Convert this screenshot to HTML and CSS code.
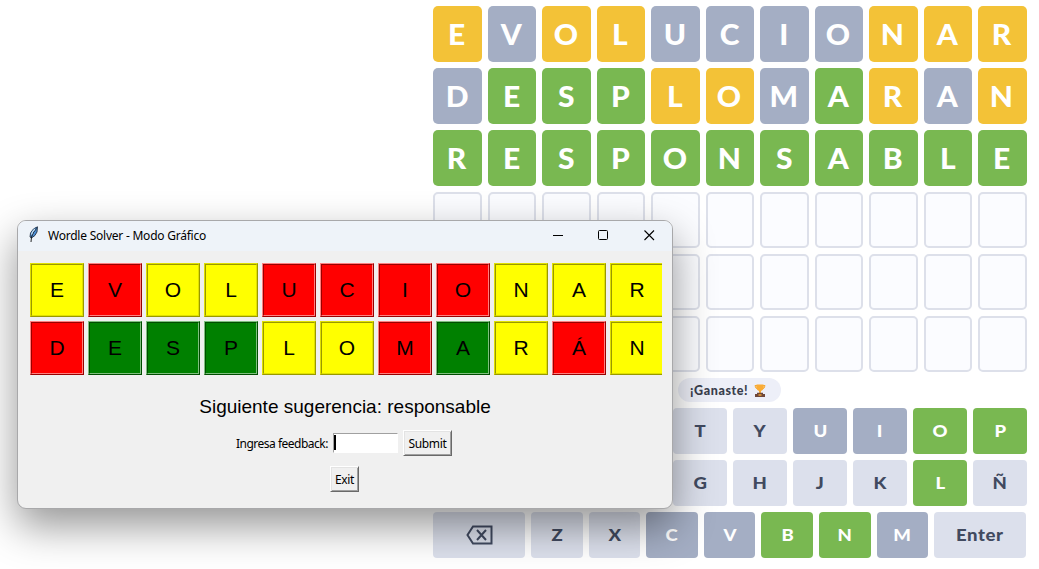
FILE: index.html
```
<!DOCTYPE html>
<html lang="es">
<head>
<meta charset="utf-8">
<title>Wordle Solver</title>
<link rel="stylesheet" href="styles.css">
</head>
<body>
<main class="game">
  <div class="board" id="board"></div>
  <div class="toast"><span>¡Ganaste!</span>
    <svg class="cup" viewBox="0 0 12 13"><path d="M1 1.500h2v3M11 1.500H9v3M1 1.500q0 3 3 3.600M11 1.500q0 3-3 3.600" fill="none" stroke="#f5a833"/><path d="M2.500.500h7v3.700Q9 6.500 7 7V9.500H5V7Q3 6.500 2.500 4.200z" fill="#fbac35"/><path d="M3 8.800h6v1.200h2V13H1v-3h2z" fill="#70483a"/><path d="M4.500 10.300h3v1.400h-3z" fill="#f5a833"/></svg>
  </div>
  <div class="keyboard" id="keyboard"></div>
</main>
<section class="window">
  <header class="titlebar">
    <svg class="feather" viewBox="0 0 12 17"><path d="M9.500.800Q5 2 2.500 7L2 11l1.500 1Q7.500 10 9 6z" fill="#4d8fd6" stroke="#182230" stroke-width=".8"/><path d="M8.500 2.500Q5 6 3.500 11L3 16" fill="none" stroke="#111" stroke-width=".9"/><path d="M7 3Q4.500 5 3.500 8.500" fill="none" stroke="#c4e0f7" stroke-width="1.300"/></svg>
    <span class="title">Wordle Solver - Modo Gráfico</span>
    <svg class="controls" viewBox="0 0 102 11"><path d="M0 5.500h10" fill="none" stroke="#000"/><rect x="45.500" y=".5" width="9" height="9" rx="1" fill="none" stroke="#000"/><path d="M91.500.5l9.500 9.500M101 .5L91.500 10" fill="none" stroke="#000" stroke-width="1.100"/></svg>
  </header>
  <div class="tiles" id="tiles"></div>
  <p class="suggestion">Siguiente sugerencia: responsable</p>
  <div class="feedback">
    <label class="label">Ingresa feedback:</label>
    <span class="entry"><i class="caret"></i></span>
    <button class="tk-button submit">Submit</button>
  </div>
  <div class="exit-row"><button class="tk-button exit">Exit</button></div>
</section>
<script src="app.js"></script>
</body>
</html>
```
FILE: styles.css
```
* { box-sizing: border-box; }
body { margin: 0; width: 1039px; height: 569px; overflow: hidden; background: #fff; position: relative; }
.game { width: 594px; margin-left: 433px; padding-top: 6px; font-family: Lato, sans-serif; font-weight: 900; }
.board { display: grid; width: 593.6px; grid-template-columns: repeat(11, 1fr); grid-auto-rows: 56px; gap: 6px; }
.cell { display: flex; align-items: center; justify-content: center; border-radius: 5px; font-size: 28px; line-height: 34px; color: #fff; }
.cell span { transform: translateX(-.5px) scaleX(1.07); }
.empty { background: #fbfcff; border: 2px solid #dde0ea; }
.yellow { background: #f3c237; color: #fff; }
.gray { background: #a4aec4; color: #fff; }
.green { background: #79b851; color: #fff; }
.toast { width: 103px; height: 24px; margin: 6px 0 6px 245px; padding-left: 12px; border-radius: 12px; background: #edeff8; color: #393e4c; display: flex; align-items: center; gap: 5px; font-size: 12.5px; }
.toast span { width: 59px; white-space: nowrap; letter-spacing: .6px; }
.cup { width: 12px; height: 13px; }
.keyboard { display: flex; flex-direction: column; gap: 6px; }
.keys { display: flex; gap: 6px; height: 46px; }
.key { flex: 1; display: flex; align-items: center; justify-content: center; border-radius: 4px; font-size: 17px; }
.key span { transform: translateY(-1px) scaleX(1.09); }
.plain { background: #dce0ec; color: #414a60; }
.wide { flex: 0 0 92px; letter-spacing: .5px; }
.keys.last { width: 593.2px; }
.erase { width: 27px; height: 20px; }

.window { position: absolute; left: 17px; top: 220px; width: 656px; height: 289px; border: 1px solid #a8a8aa; border-radius: 9px; background: #f0f0f0; box-shadow: 0 17px 42px rgba(0,0,0,.42); overflow: hidden; font-family: "Noto Sans", sans-serif; color: #000; }
.titlebar { height: 30px; background: #eef3f9; display: flex; align-items: center; padding: 0 17px 0 10px; }
.feather { width: 12px; height: 17px; margin-top: -3px; }
.title { font-size: 12px; line-height: 16px; margin-left: 8px; width: 160px; white-space: nowrap; letter-spacing: -.23px; }
.controls { width: 102px; height: 11px; margin-left: auto; margin-top: -2px; }
.tiles { margin: 12px 10px 0 12px; display: grid; grid-template-columns: repeat(11, 54px); grid-auto-rows: 54px; gap: 4px; overflow: hidden; }
.tile { border: 1px solid; display: flex; font: 21px "Liberation Sans", Arial, sans-serif; }
.tile span { flex: 1; border: 1px solid; display: flex; align-items: center; justify-content: center; }
.t-yellow { background: #ff0; border-color: #e0e000 #999900 #999900 #e0e000; }
.t-yellow span { border-color: #999900 #e0e000 #e0e000 #999900; }
.t-red { background: #f00; border-color: #ff7f7f #990000 #990000 #ff7f7f; }
.t-red span { border-color: #990000 #ff7f7f #ff7f7f #990000; }
.t-green { background: #008000; border-color: #7fbf7f #004d00 #004d00 #7fbf7f; }
.t-green span { border-color: #004d00 #7fbf7f #7fbf7f #004d00; }
.suggestion { margin: 21px 0 0; text-align: center; font: 19px/22px "Liberation Sans", Arial, sans-serif; }
.feedback { display: flex; align-items: center; margin: 12px 0 0 218px; height: 26px; }
.label { font-size: 12px; letter-spacing: -.5px; width: 92px; white-space: nowrap; }
.entry { width: 65px; height: 20px; margin-left: 5px; background: #fff; border: 1px solid; border-color: #a0a0a0 #fff #fff #a0a0a0; padding: 1px 0; margin-top: -1px; }
.caret { display: block; width: 2px; height: 15px; background: #000; }
.tk-button { height: 26px; padding: 0; font: 12px "Noto Sans", sans-serif; letter-spacing: -.3px; background: #f0f0f0; color: #000; border: 1px solid; border-color: #fff #696969 #696969 #fff; border-radius: 0; box-shadow: inset 1px 1px #e3e3e3, inset -1px -1px #a0a0a0; }
.submit { width: 49px; margin-left: 5px; }
.exit-row { display: flex; margin: 10px 0 0 312px; }
.exit { width: 29px; }
```
FILE: app.js
```
const colours = { y: 'yellow', x: 'gray', g: 'green', p: 'plain', r: 'red' };
const board = document.getElementById('board');
[['EVOLUCIONAR', 'yxyyxxxxyyy'], ['DESPLOMARAN', 'xgggyyxgyxy'], ['RESPONSABLE', 'ggggggggggg']].forEach(([word, marks]) => {
  [...word].forEach((c, i) => board.insertAdjacentHTML('beforeend', `<div class="cell ${colours[marks[i]]}"><span>${c}</span></div>`));
});
for (let i = 0; i < 33; i++) board.insertAdjacentHTML('beforeend', '<div class="cell empty"></div>');

const keyboard = document.getElementById('keyboard');
const key = (c, m, extra = '') => `<div class="key ${colours[m]} ${extra}"><span>${c}</span></div>`;
const keys = (letters, marks) => [...letters].map((c, i) => key(c, marks[i])).join('');
const erase = '<svg class="erase" viewBox="0 0 27 20"><path d="M7 1.500h18.500v17H7L1.500 10z" fill="none" stroke="#414a60" stroke-width="2"/><path d="M11 5l9 10M20 5l-9 10" fill="none" stroke="#414a60" stroke-width="2"/></svg>';
keyboard.innerHTML =
  `<div class="keys">${keys('QWERTYUIOP', 'ppggppxxgg')}</div>` +
  `<div class="keys">${keys('ASDFGHJKLÑ', 'ggxpppppgp')}</div>` +
  `<div class="keys last"><div class="key plain wide">${erase}</div>${keys('ZXCVBNM', 'ppxxggx')}${key('Enter', 'p', 'wide')}</div>`;

const tiles = document.getElementById('tiles');
[['EVOLUCIONAR', 'yryyrrrryyy'], ['DESPLOMARÁN', 'rgggyyrgyry']].forEach(([word, marks]) => {
  [...word].forEach((c, i) => tiles.insertAdjacentHTML('beforeend', `<div class="tile t-${colours[marks[i]]}"><span>${c}</span></div>`));
});
```
